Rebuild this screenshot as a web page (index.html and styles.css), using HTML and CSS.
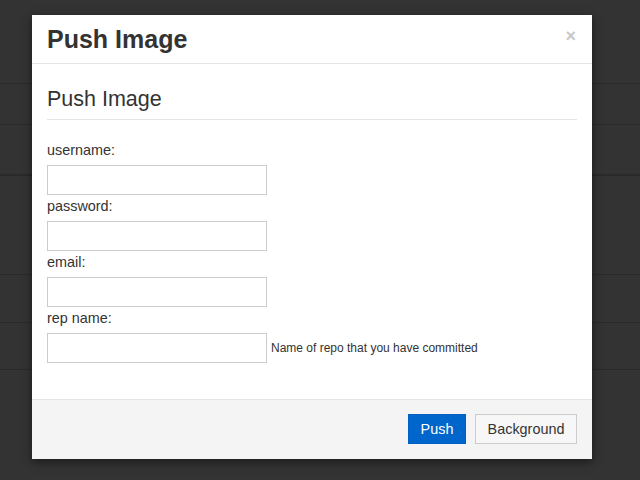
FILE: index.html
```html
<!DOCTYPE html>
<html>
<head>
<meta charset="utf-8">
<link rel="stylesheet" href="styles.css">
</head>
<body>
<div class="page">
  <div class="row r1"></div>
  <div class="row r2"></div>
  <div class="row r3"></div>
  <div class="row r4"></div>
  <div class="row r5"></div>
  <div class="row r6"></div>
</div>
<div class="modal">
  <div class="modal-header">
    <h2 class="modal-title">Push Image</h2>
    <span class="close">×</span>
  </div>
  <div class="modal-body">
    <h3 class="section-title">Push Image</h3>
    <form class="form">
      <label class="field-label">username:</label>
      <input class="field" type="text">
      <label class="field-label">password:</label>
      <input class="field" type="password">
      <label class="field-label">email:</label>
      <input class="field" type="text">
      <label class="field-label">rep name:</label>
      <div class="field-row">
        <input class="field" type="text">
        <span class="help">Name of repo that you have committed</span>
      </div>
    </form>
  </div>
  <div class="modal-footer">
    <button class="btn btn-primary" type="button">Push</button>
    <button class="btn btn-default" type="button">Background</button>
  </div>
</div>
</body>
</html>
```

FILE: styles.css
```css
html, body {
  margin: 0;
  padding: 0;
  width: 640px;
  height: 480px;
  overflow: hidden;
  background: #333333;
  font-family: "Liberation Sans", Arial, sans-serif;
  color: #333;
}

.page {
  display: flex;
  flex-direction: column;
}

.row {
  border-bottom: 1px solid #2a2a2a;
  box-sizing: border-box;
}
.r1 { height: 84px; }
.r2 { height: 41px; }
.r3 { height: 51px; border-bottom: 2px solid #2a2a2a; }
.r4 { height: 99px; }
.r5 { height: 48px; }
.r6 { height: 47px; }

.modal {
  position: absolute;
  top: 15px;
  left: 32px;
  width: 560px;
  background: #fff;
  box-shadow: 0 3px 9px rgba(0, 0, 0, 0.5);
}

.modal-header {
  position: relative;
  padding: 11px 15px 10px;
  border-bottom: 1px solid #e5e5e5;
}

.modal-title {
  margin: 0;
  font-size: 25px;
  line-height: 27px;
  font-weight: bold;
  color: #333;
}

.close {
  position: absolute;
  right: 16px;
  top: 11px;
  font-size: 18px;
  font-weight: bold;
  line-height: 20px;
  color: #c8c8c8;
}

.modal-body {
  padding: 15px 15px 36px;
}

.section-title {
  margin: 9px 0 0;
  padding-bottom: 8px;
  border-bottom: 1px solid #e5e5e5;
  font-size: 21.5px;
  line-height: 23px;
  font-weight: normal;
  color: #333;
}

.form {
  margin-top: 19px;
  display: flex;
  flex-direction: column;
  align-items: flex-start;
}

.field-label {
  display: block;
  font-size: 14.4px;
  line-height: 20px;
  padding-top: 1px;
  margin-bottom: 5px;
  color: #333;
}

.field {
  box-sizing: border-box;
  width: 220px;
  height: 30px;
  margin: 0;
  border: 1px solid #cccccc;
  background: #fff;
  padding: 4px 6px;
  font-family: inherit;
  font-size: 14px;
  outline: none;
}

.field-row {
  display: flex;
  align-items: center;
  gap: 4px;
}

.help {
  font-size: 12px;
  color: #333;
}

.modal-footer {
  display: flex;
  justify-content: flex-end;
  gap: 9px;
  padding: 14px 15px 15px;
  border-top: 1px solid #e5e5e5;
  background: #f4f4f4;
}

.btn {
  box-sizing: border-box;
  height: 30px;
  padding: 0;
  margin: 0;
  font-family: inherit;
  font-size: 14.4px;
  line-height: 28px;
  text-align: center;
  border: 1px solid #ccc;
  border-radius: 0;
  cursor: pointer;
}

.btn-primary {
  width: 58px;
  background: #0066cc;
  border-color: #0060c0;
  color: #fff;
}

.btn-default {
  width: 102px;
  background: #f7f7f7;
  border-color: #cccccc;
  color: #333;
}
```
